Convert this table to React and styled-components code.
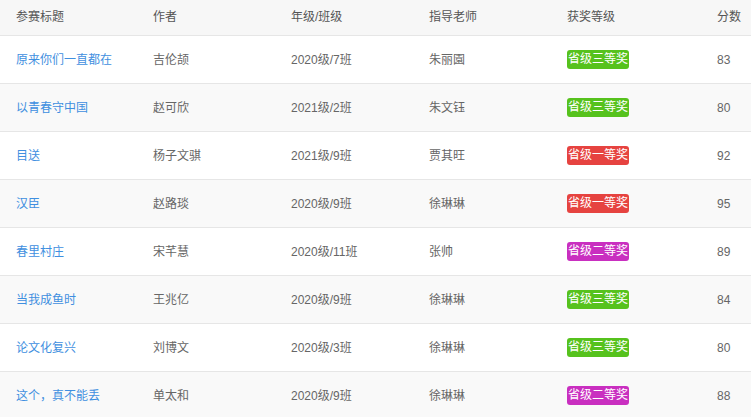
import React from "react";
import styled, { createGlobalStyle } from "styled-components";

const GlobalStyle = createGlobalStyle`
  html, body {
    margin: 0;
    padding: 0;
    background: #fff;
  }
  body {
    font-family: "Liberation Sans", "Noto Sans CJK SC", sans-serif;
    font-size: 12px;
    color: #666;
  }
`;

const columns = "137px 138px 138px 138px 154px 46px";

const rows = [
  { title: "原来你们一直都在", author: "吉伦颉", grade: "2020级/7班", teacher: "朱丽園", award: "省级三等奖", level: 3, score: 83 },
  { title: "以青春守中国", author: "赵可欣", grade: "2021级/2班", teacher: "朱文钰", award: "省级三等奖", level: 3, score: 80 },
  { title: "目送", author: "杨子文骐", grade: "2021级/9班", teacher: "贾其旺", award: "省级一等奖", level: 1, score: 92 },
  { title: "汉臣", author: "赵路琰", grade: "2020级/9班", teacher: "徐琳琳", award: "省级一等奖", level: 1, score: 95 },
  { title: "春里村庄", author: "宋芊慧", grade: "2020级/11班", teacher: "张帅", award: "省级二等奖", level: 2, score: 89 },
  { title: "当我成鱼时", author: "王兆亿", grade: "2020级/9班", teacher: "徐琳琳", award: "省级三等奖", level: 3, score: 84 },
  { title: "论文化复兴", author: "刘博文", grade: "2020级/3班", teacher: "徐琳琳", award: "省级三等奖", level: 3, score: 80 },
  { title: "这个，真不能丢", author: "单太和", grade: "2020级/9班", teacher: "徐琳琳", award: "省级二等奖", level: 2, score: 88 },
];

const badgeColors = {
  1: "#e64340",
  2: "#c92fc0",
  3: "#56c21d",
};

export default function App() {
  return (
    <>
      <GlobalStyle />
      <Table>
        <HeaderRow>
          <HeadCell>参赛标题</HeadCell>
          <HeadCell>作者</HeadCell>
          <HeadCell>年级/班级</HeadCell>
          <HeadCell>指导老师</HeadCell>
          <HeadCell>获奖等级</HeadCell>
          <HeadCell $last>分数</HeadCell>
        </HeaderRow>
        {rows.map((r, i) => (
          <Row key={i} $striped={i % 2 === 1}>
            <Cell>
              <TitleLink href="#">{r.title}</TitleLink>
            </Cell>
            <Cell>{r.author}</Cell>
            <Cell>{r.grade}</Cell>
            <Cell>{r.teacher}</Cell>
            <Cell>
              <Badge $color={badgeColors[r.level]}>{r.award}</Badge>
            </Cell>
            <Cell $last>{r.score}</Cell>
          </Row>
        ))}
      </Table>
    </>
  );
}

const Table = styled.div`
  width: 751px;
  height: 417px;
  overflow: hidden;
`;

const HeaderRow = styled.div`
  display: grid;
  grid-template-columns: ${columns};
  height: 35px;
  align-items: center;
  background: #f7f7f7;
  border-bottom: 1px solid #e6e6e6;
`;

const HeadCell = styled.div`
  padding-left: ${(p) => (p.$last ? "12px" : "16px")};
  color: #555;
  line-height: 16px;
  margin-top: -2px;
  white-space: nowrap;
`;

const Row = styled.div`
  display: grid;
  grid-template-columns: ${columns};
  height: 47px;
  align-items: center;
  background: ${(p) => (p.$striped ? "#f9f9f9" : "#fff")};
  border-bottom: 1px solid #e6e6e6;
`;

const Cell = styled.div`
  padding-left: ${(p) => (p.$last ? "12px" : "16px")};
  line-height: 16px;
  white-space: nowrap;
  color: #666;
`;

const TitleLink = styled.a`
  color: #3f8fe0;
  text-decoration: none;
`;

const Badge = styled.span`
  display: inline-block;
  height: 19px;
  line-height: 19px;
  padding: 0 1px;
  border-radius: 3px;
  color: #fff;
  background: ${(p) => p.$color};
`;
